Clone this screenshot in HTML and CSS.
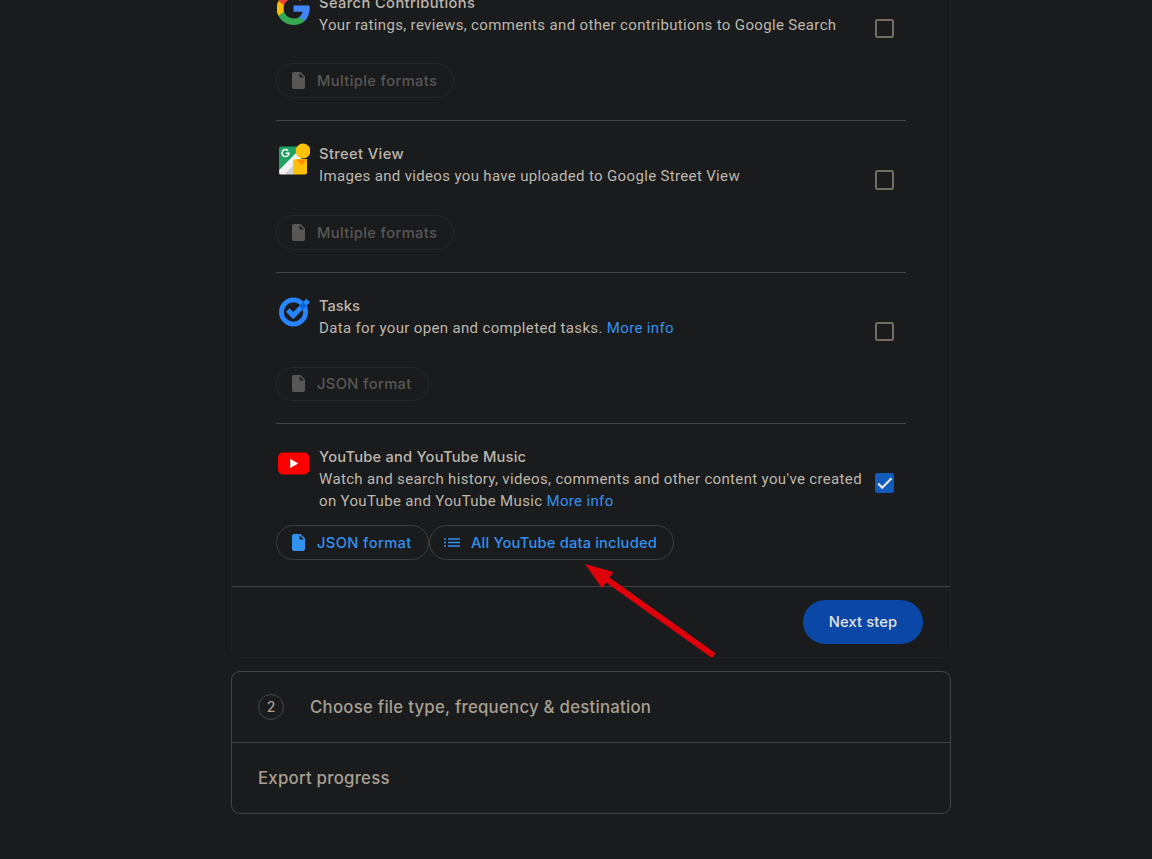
FILE: index.html
```html
<!DOCTYPE html>
<html lang="en">
<head>
<meta charset="utf-8">
<title>Google Takeout</title>
<link rel="stylesheet" href="styles.css">
</head>
<body>
<svg class="defs" aria-hidden="true">
  <symbol id="file" viewBox="0 0 13 17"><path d="M2 0H8.5L13 4.5V15.2Q13 17 11.2 17H1.8Q0 17 0 15.2V1.8Q0 0 2 0ZM7.6 1.3V5.5H11.8Z" fill="currentColor" fill-rule="evenodd"/></symbol>
</svg>
<main class="page">
  <section class="panel">
    <div class="products">
      <article class="product">
        <svg class="logo" viewBox="0 0 48 48"><path fill="#4285f4" d="M47.5 24.5c0-1.6-.2-3.2-.4-4.7H24v9.1h13.2c-.6 3-2.3 5.6-4.9 7.3v6h7.9c4.7-4.3 7.3-10.6 7.3-17.7Z"/><path fill="#34a853" d="M24 48c6.6 0 12.2-2.1 16.2-5.8l-7.9-6c-2.2 1.5-5 2.3-8.3 2.3-6.4 0-11.8-4.2-13.7-10h-8.2v6.2C6.1 42.6 14.4 48 24 48Z"/><path fill="#fbbc05" d="M10.3 28.5a14 14 0 0 1 0-9.1v-6.2H2.1a23.7 23.7 0 0 0 0 21.5Z"/><path fill="#ea4335" d="M24 9.5c3.6 0 6.9 1.2 9.4 3.6l7-6.9A23.7 23.7 0 0 0 2.1 13.2l8.2 6.2c1.9-5.8 7.3-9.9 13.7-9.9Z"/></svg>
        <div class="info"><h3 class="wide">Search Contributions</h3><p>Your ratings, reviews, comments and other contributions to Google Search</p></div>
        <span class="check"></span>
        <div class="chips"><button class="chip multi off"><svg class="file"><use href="#file"/></svg><span>Multiple formats</span></button></div>
      </article>
      <article class="product">
        <svg class="logo" viewBox="0 0 33 33"><path d="M4 3.5H29V5L2 32V5.5Q2 3.5 4 3.5Z" fill="#1da261"/><path d="M24 5H29V11L8 31.5H4Q2.2 31.5 2.2 29.5V27Z" fill="#f1f1f1"/><path d="M16 23V31.5H7.5Z" fill="#d0d1d2"/><path d="M16 19Q16 16 19 16H30V29.5Q30 31.5 28 31.5H16Z" fill="#ffc107"/><path d="M19.5 16.5H29.5L24.5 22.5Z" fill="#ff9100"/><circle cx="26" cy="8" r="7.4" fill="#ffc107"/><path d="M11.1 7.7A3.5 3.5 0 1 0 12 10.2H8.7" fill="none" stroke="#fff" stroke-width="1.5"/></svg>
        <div class="info"><h3 class="wide">Street View</h3><p>Images and videos you have uploaded to Google Street View</p></div>
        <span class="check"></span>
        <div class="chips"><button class="chip multi off"><svg class="file"><use href="#file"/></svg><span>Multiple formats</span></button></div>
      </article>
      <article class="product tasks">
        <svg class="logo" viewBox="0 0 33 33"><circle cx="16.5" cy="17" r="12.1" fill="none" stroke="#2684fc" stroke-width="4.8"/><path d="M10.8 15 16.2 20.6 31.2 5.6" fill="none" stroke="#2684fc" stroke-width="5"/><path d="M22.3 11 26 7.2 29.7 10.7 25.9 14.6Z" fill="#0066da"/></svg>
        <div class="info"><h3>Tasks</h3><p>Data for your open and completed tasks. <a>More info</a></p></div>
        <span class="check"></span>
        <div class="chips"><button class="chip json off"><svg class="file"><use href="#file"/></svg><span>JSON format</span></button></div>
      </article>
      <article class="product youtube">
        <svg class="logo" viewBox="0 0 33 33"><rect x="1" y="6.5" width="31.2" height="22" rx="5" fill="#f00"/><path d="M13.2 12.7V22L21.2 17.4Z" fill="#fff"/></svg>
        <div class="info"><h3>YouTube and YouTube Music</h3><p>Watch and search history, videos, comments and other content you've created<br>on YouTube and YouTube Music <a>More info</a></p></div>
        <span class="check on"><svg viewBox="0 0 19 20"><path d="M3.2 10.5 7.2 14.7 16.5 5.2" fill="none" stroke="#e8e6e3" stroke-width="2.2"/></svg></span>
        <div class="chips"><button class="chip json"><svg class="file"><use href="#file"/></svg><span>JSON format</span></button><button class="chip all"><svg class="list" viewBox="0 0 16 9"><path d="M0 1.1H2M4 1.1H16M0 4.5H2M4 4.5H16M0 7.9H2M4 7.9H16" stroke="currentColor" stroke-width="1.5"/></svg><span>All YouTube data included</span></button></div>
      </article>
    </div>
    <footer class="actions"><button class="next">Next step</button></footer>
  </section>
  <section class="steps">
    <div class="step"><span class="number">2</span><h2>Choose file type, frequency &amp; destination</h2></div>
    <div class="step"><h2>Export progress</h2></div>
  </section>
</main>
<svg class="arrow" viewBox="0 0 132 96"><path d="M1 1 29.3 9 25.5 14.6 131.5 90.2 128 94.9 22 19.6 18 25.3Z" fill="#e0000b"/></svg>
</body>
</html>
```

FILE: styles.css
```css
* { box-sizing: border-box; }
body { margin: 0; height: 859px; overflow: hidden; background: #1a1b1c; color: #bdb7ae; font-family: Roboto, "Liberation Sans", sans-serif; }
h2, h3, p { margin: 0; }
button { font: inherit; margin: 0; padding: 0; }
.defs { position: absolute; width: 0; height: 0; }
.page { width: 720px; margin: -30px 0 0 231px; }
.panel { border: 1px solid #202122; border-top: 0; border-radius: 0 0 9px 9px; }
.products { padding: 0 44px; }
.product { display: grid; grid-template-columns: 43px 556px 31px; grid-template-rows: 93px 35px; align-items: start; height: 151px; border-bottom: 1px solid #424445; }
.product:nth-child(2) { height: 152px; grid-template-rows: 94px 35px; }
.product.tasks { grid-template-rows: 94px 34px; }
.product.youtube { height: 162px; grid-template-rows: 101px 35px; border: 0; }
.logo { width: 33px; height: 33px; margin: 22px 0 0 1px; display: block; }
.info { padding-top: 22px; white-space: nowrap; line-height: 22px; }
.info h3 { font: 500 14.7px/22px Inter, sans-serif; }
.info h3.wide { letter-spacing: .39px; }
.youtube h3 { letter-spacing: .2px; }
.info p { font-size: 15px; letter-spacing: .345px; }
a { color: #3391f1; }
.check { width: 19px; height: 19px; margin-top: 49px; border: 2px solid #756b5e; border-radius: 2.5px; display: block; }
.product:nth-child(2) .check { height: 20px; }
.check.on { height: 20px; border: 0; background: #115bbd; }
.check svg { display: block; width: 19px; height: 20px; }
.chips { grid-column: 1 / -1; display: flex; height: 100%; }
.chip { height: 100%; display: flex; align-items: center; flex: none; background: none; border: 1px solid #3c3f40; border-radius: 18px; color: #3391ef; padding-left: 15px; font: 500 14.7px/22px Inter, sans-serif; letter-spacing: .38px; white-space: nowrap; }
.chip.off { color: #585755; border-color: #242627; }
.chip.multi { width: 178px; }
.chip.json { width: 153px; }
.chip.all { width: 245px; padding-left: 14px; letter-spacing: .17px; }
.file { width: 13px; height: 17px; margin-right: 12px; position: relative; top: -0.5px; }
.list { width: 16px; height: 9px; margin: 0 11px 1px 0; }
.actions { height: 71px; border-top: 1px solid #424445; padding: 13px 27px; display: flex; justify-content: flex-end; }
.next { width: 120px; height: 44px; border: 0; border-radius: 22px; background: #0a47a6; color: #e5e3df; font: 500 14.7px/22px Inter, sans-serif; letter-spacing: .12px; }
.steps { margin-top: 13px; height: 143px; border: 1px solid #424445; border-radius: 9px; }
.step { height: 70px; padding-left: 26px; display: flex; align-items: center; }
.step + .step { height: 71px; border-top: 1px solid #424445; }
.step h2 { font: 500 16.8px/24px Inter, sans-serif; letter-spacing: .24px; color: #a89f92; white-space: nowrap; }
.number { width: 26px; height: 26px; margin-right: 26px; border: 1px solid #45484a; border-radius: 50%; display: grid; place-items: center; font: 500 14px/24px Inter, sans-serif; color: #a89f92; }
.arrow { position: absolute; left: 584px; top: 563px; width: 132px; height: 96px; }
```
